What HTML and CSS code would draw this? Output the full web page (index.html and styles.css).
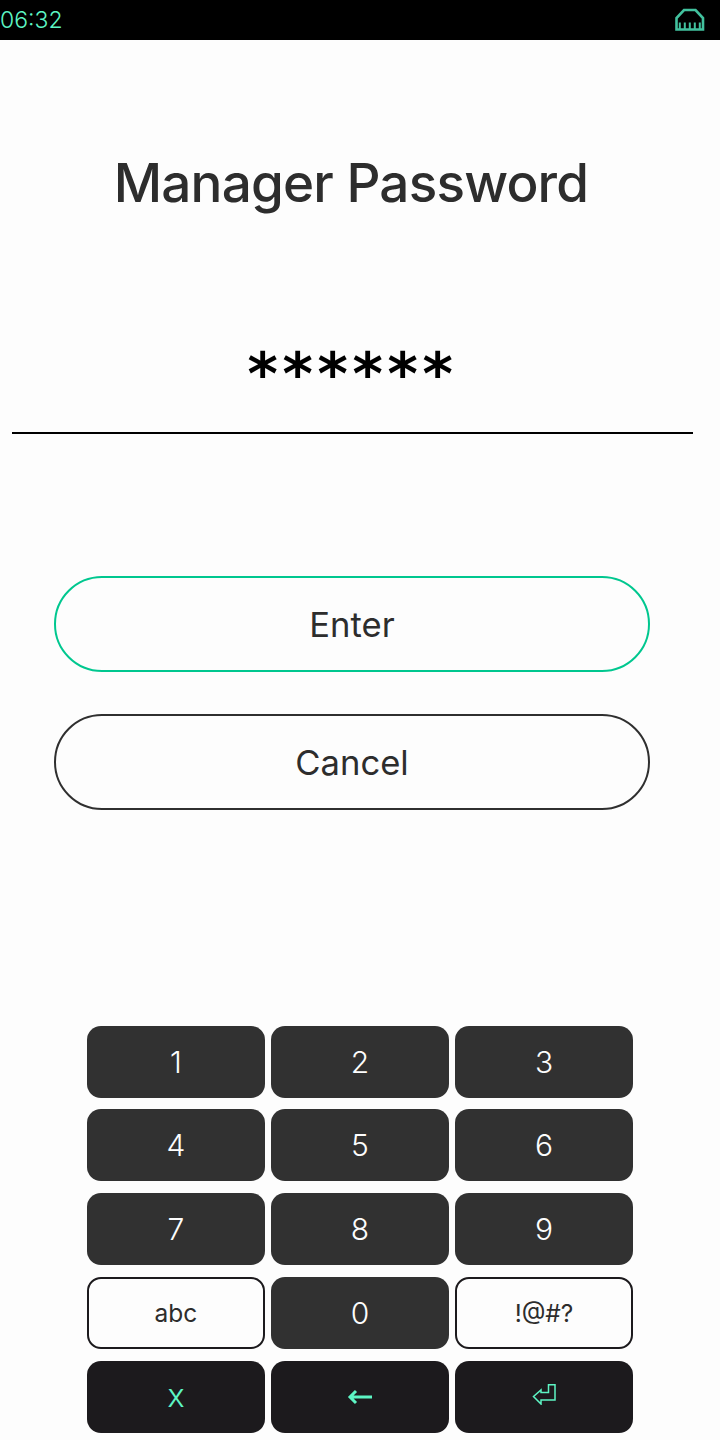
FILE: index.html
```html
<!DOCTYPE html>
<html lang="en">
<head>
<meta charset="UTF-8">
<title>Manager Password</title>
<link rel="stylesheet" href="styles.css">
</head>
<body>
<div class="status-bar">
<span class="clock">06:32</span>
<svg class="net-icon" width="30" height="24" viewBox="0 0 30 24" fill="none" stroke="#42c19e" stroke-width="2.6">
<path d="M1.5 21.5V10L9 2H20.5L28 10V21.5Z"/>
<path d="M4.8 21V14.5M9.8 21V14.5M14.8 21V14.5M19.8 21V14.5M24.8 21V14.5" stroke-width="2"/>
</svg>
</div>
<div class="container">
<h1>Manager Password</h1>
<div class="password">******</div>
<div class="actions">
<button class="pill pill-enter">Enter</button>
<button class="pill pill-cancel">Cancel</button>
</div>
<div class="keypad">
<button class="key">1</button>
<button class="key">2</button>
<button class="key">3</button>
<button class="key">4</button>
<button class="key">5</button>
<button class="key">6</button>
<button class="key">7</button>
<button class="key">8</button>
<button class="key">9</button>
<button class="key key-alt">abc</button>
<button class="key">0</button>
<button class="key key-alt">!@#?</button>
<button class="key key-fn key-x">x</button>
<button class="key key-fn">
<svg class="back-icon" width="25" height="16" viewBox="0 0 25 16" fill="none" stroke="#5df5c4" stroke-width="3"><path d="M25 8H3M9 2L3 8L9 14"/></svg>
</button>
<button class="key key-fn">
<svg class="return-icon" width="24" height="21" viewBox="0 0 24 21" fill="none" stroke="#5df5c4" stroke-width="1.5"><path d="M16.5 .75H23V16H9V20L1.5 12.5L9 6V8.5H16.5Z"/></svg>
</button>
</div>
</div>
</body>
</html>
```

FILE: styles.css
```css
* {
box-sizing: border-box;
}
body {
margin: 0;
width: 720px;
height: 1440px;
overflow: hidden;
background-color: #fdfdfd;
font-family: Inter, "Liberation Sans", sans-serif;
color: #2d2d2d;
}
.status-bar {
height: 40px;
background-color: #000;
display: flex;
align-items: center;
justify-content: space-between;
padding-right: 15px;
}
.clock {
font-size: 23px;
font-weight: 300;
color: #5df5c4;
}
.net-icon {
display: block;
}
.container {
display: flex;
flex-direction: column;
}
h1 {
margin: 112px 0 0;
height: 64px;
line-height: 62px;
font-size: 53px;
font-weight: 450;
letter-spacing: -0.8px;
text-align: center;
padding-right: 18px;
}
.password {
margin: 128px 0 0 12px;
width: 681px;
height: 90px;
line-height: 60px;
border-bottom: 2px solid #000;
font-family: "DejaVu Sans", sans-serif;
font-weight: 700;
font-size: 58px;
letter-spacing: 4.7px;
color: #000;
text-align: center;
}
.actions {
margin-top: 142px;
padding-left: 54px;
display: flex;
flex-direction: column;
gap: 42px;
}
.pill {
width: 596px;
height: 96px;
border-radius: 48px;
background-color: #fdfdfd;
font-family: inherit;
font-size: 34.6px;
color: #2d2d2d;
border: 2px solid #2f2f2f;
}
.pill-enter {
border-color: #00c78f;
}
.keypad {
margin-top: 215.6px;
margin-left: 87px;
display: grid;
grid-template-columns: repeat(3, 178px);
grid-auto-rows: 72px;
column-gap: 6px;
row-gap: 11.75px;
}
.key {
border: none;
border-radius: 14px;
background-color: #313131;
color: #fdfdfd;
font-family: inherit;
font-size: 30px;
font-weight: 300;
padding: 0;
display: flex;
align-items: center;
justify-content: center;
}
.key-alt {
background-color: #fdfdfd;
border: 2px solid #1c1a1d;
color: #2d2d2d;
font-size: 24.5px;
font-weight: 400;
}
.key-fn {
background-color: #1c1a1d;
color: #5df5c4;
font-size: 33px;
font-weight: 350;
}
.key-x {
padding-bottom: 3px;
}
.back-icon {
margin-left: -2px;
}
.return-icon {
margin-top: -4px;
}
```
